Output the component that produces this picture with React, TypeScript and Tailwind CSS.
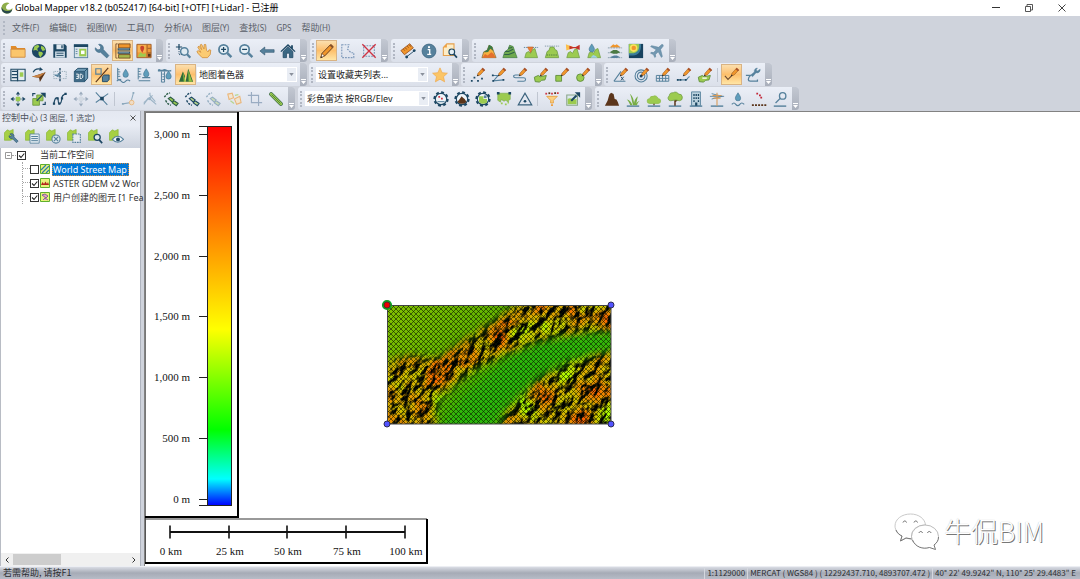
import React from "react";
import type { ReactNode } from "react";

const navy = "#1d4763";
const steel = "#56819c";
const green = "#9ccb50";
const orange = "#f0962c";
const brown = "#5b351b";

function Icon({ children, size = "h-[18px] w-[18px]" }: { children: ReactNode; size?: string }) {
  return (
    <svg viewBox="0 0 18 18" className={size} fill="none" aria-hidden="true">
      {children}
    </svg>
  );
}

const pencil = (
  <g>
    <path d="M9 7 14 1.400l2.400 2.200L11.400 9l-3 1z" fill={orange} stroke="#93541c" strokeWidth=".6" />
    <path d="m13 2.400 1.300-1.500 2.800 2.600-1.400 1.300z" fill="#a94f28" />
    <path d="m7.600 10.400.9-2 1.400 1.200z" fill="#2b2b2b" />
  </g>
);
const wave = <path d="M2 17h14" stroke={steel} strokeWidth="1.600" />;
const lowHill = "M2 16.500 3.600 11l2.600-1.400 2.200 2 2.400-4.200 2.600-1.200 3 10.300z";
const magnifier = (sign: ReactNode) => (
  <>
    <circle cx="7.400" cy="7.200" r="5.200" fill="#e6f0f6" stroke={steel} strokeWidth="2" />
    <path d="m11.600 11.400 4.600 4.600" stroke={steel} strokeWidth="2.800" />
    {sign}
  </>
);
const gear = (inner: ReactNode) => (
  <>
    <circle cx="9" cy="9" r="7.400" fill="none" stroke={navy} strokeWidth="2.400" strokeDasharray="3.200 2.600" />
    <circle cx="9" cy="9" r="6.400" fill="#eff4f8" stroke={navy} strokeWidth="1.300" />
    {inner}
  </>
);
const poly = <path d="M1.500 11.500 6 9.500l2 1.500 7-1.500-1.500 5-4 .5-2 2-5-.5z" fill={green} stroke="#5c8d3b" strokeWidth="1" />;
const crossArrows = (c: string, mid: string) => (
  <>
    <path d="M9 .5 11.400 4H6.600zM9 17.500l-2.400-3.500h4.800zM.5 9 4 6.600v4.800zM17.500 9 14 11.400V6.600z" fill={c} />
    <path d="M9 4v10M4 9h10" stroke={c} strokeWidth="1" strokeDasharray="1.500 1" />
    <rect x="6.500" y="6.500" width="5" height="5" fill={mid} />
  </>
);
const chain = (a: string, b: string) => (
  <>
    <path d="m6 8.500 2.500-1.500 4 3-2 2.500zM10.500 13.500l2-2.500 4.500 3-2 2.500z" fill={a} stroke={b} strokeWidth="1.200" />
    <path d="M1.500 7C3 5 4 3 8 2M3 10.500c1 3 3 4.500 6 5.500" stroke={b} strokeWidth="1.500" strokeDasharray="2.500 1.200" />
  </>
);
const drop = (x: number, y: number) => (
  <path transform={`translate(${x} ${y})`} d="M0-4.500C1.600-2 3 0 3 1.600a3 3 0 0 1-6 0C-3 0-1.600-2 0-4.500z" fill="#5f9dbb" stroke="#3a6987" strokeWidth=".6" />
);

const art: Record<string, ReactNode> = {
  open: (
    <>
      <path d="M1 16V3.500h5.500l1.500 2h9V16z" fill="#e08b2a" />
      <path d="M1 16V7h16v9z" fill="#fbc66c" stroke="#c58238" strokeWidth=".8" />
    </>
  ),
  globe: (
    <>
      <circle cx="9" cy="9" r="8" fill={navy} />
      <path d="M4 3.500 8 2l1.500 2L7 6.500 8 9 5.500 8 2.500 8.500zM8.500 9.500l4 .5 1 2-3 4.200L8.500 13zM11.500 3l3 1.500 1.600 3.500-3 1-2-3z" fill={green} />
    </>
  ),
  save: (
    <>
      <path d="M1.500 1.500h13l2 2v13h-15z" fill={navy} />
      <path d="M5 1.500h8v5.500H5z" fill="#dfe8ef" />
      <path d="M10.500 2.500h1.500v3.500h-1.500z" fill={navy} />
      <path d="M3.500 9.500h11v7h-11z" fill="#cfdde7" />
      <path d="M5 11.500h8M5 14h8" stroke={navy} strokeWidth="1" />
    </>
  ),
  overlay: (
    <>
      <rect x="1.500" y="2" width="15" height="14.500" fill="#dbe5ec" stroke={steel} />
      <path d="M1 1.500h16v3H1z" fill={navy} />
      <path d="M3 7h2M3 9.500h2M3 12h2" stroke={steel} />
      <rect x="7" y="6.500" width="8" height="8.500" fill={green} />
      <rect x="9" y="8.500" width="4" height="4" fill="#fff" />
    </>
  ),
  wrench: (
    <path d="M6.600 1.400a4.600 4.600 0 0 1 3.800 5.800l6.400 7-2.400 2.600-7-6.400A4.600 4.600 0 0 1 1.400 5.400l3 2.400 2.800-.8.400-2.800-2.400-2.600z" fill={steel} stroke="#3b6885" strokeWidth=".7" />
  ),
  layers: (
    <>
      <path d="M4 1h13v4.500H4z" fill={orange} stroke={brown} strokeWidth=".8" />
      <path d="M3 6h14v2.500H3zM3 9.500h14V12H3z" fill={navy} />
      <path d="M4 6.800h12M4 10.400h12" stroke="#b7c9d5" strokeWidth=".8" />
      <path d="M4 13h13v4H4z" fill="#a5b64a" stroke={brown} strokeWidth=".8" />
      <path d="M3 1H1v16h2" stroke={brown} strokeWidth=".8" />
    </>
  ),
  maplib: (
    <>
      <path d="M1 1.500h16v15H1z" fill="#f09a38" stroke="#9d5b28" />
      <path d="M2 2.500h9v8H2z" fill="#f6b352" />
      <path d="m2 15.500 3-5 3 2 3-1v4z" fill={green} />
      <circle cx="7" cy="5.500" r="2.300" fill="#c9422b" />
      <path d="m5 7 2 4 2-4z" fill="#c9422b" />
      <path d="M12.500 2v14M13 6h4M13 11h4" stroke="#9d5b28" />
      <path d="M13.500 12h3v3.500h-3z" fill={brown} />
    </>
  ),
  zoombox: (
    <>
      <path d="M4.500 1v7M1 4.500h7" stroke={navy} strokeWidth="1.400" />
      <circle cx="10.500" cy="9.500" r="4.200" fill="#dfeaf1" stroke={steel} strokeWidth="1.700" />
      <path d="m13.600 12.600 3.600 3.900" stroke={steel} strokeWidth="2.400" />
      <path d="M4.500 9v4h3" stroke={navy} strokeDasharray="1 1" />
    </>
  ),
  hand: (
    <path d="M7 16.500 2.500 12 1 9.500l1.500-.9 3 1.900L2 4.500l1.400-1 3 4L4.600 2.200 6.300 1.500 9 6.800l.2-5 1.700-.2.900 6.500 1.800 2 1-2.400 2 .3-.6 5-3 3.500z" fill="#fbcb72" stroke="#cf8d3a" strokeWidth=".9" />
  ),
  zoomin: magnifier(<path d="M7.400 4.400V10M4.600 7.200h5.600" stroke={navy} strokeWidth="1.400" />),
  zoomout: magnifier(<path d="M4.600 7.200h5.600" stroke={navy} strokeWidth="1.400" />),
  back: <path d="M1 9 6.500 4.500v3H17v3H6.500v3z" fill={steel} stroke="#31566f" strokeWidth=".7" />,
  home: (
    <>
      <path d="M9 1 .5 9.200l1 1L9 3.400l7.500 6.800 1-1L14.500 6.500V2.500h-2v2z" fill={navy} />
      <path d="M3.500 9.500 9 4.300l5.500 5.200v7h-3.800v-5H7.300v5H3.500z" fill="#3c6883" stroke={navy} strokeWidth=".8" />
    </>
  ),
  pencil: (
    <>
      <path d="M3.500 11.500 12.800 2l3 2.800L6.500 14.500l-4.500 2z" fill={orange} stroke={brown} strokeWidth="1" />
      <path d="m12 2.800 1.600-1.600 3 2.800-1.600 1.800z" fill="#86512a" />
      <path d="m3.500 12 2.500 2.500-4 2z" fill="#fff" stroke={brown} strokeWidth=".6" />
      <path d="m2 16.500.4-1.600 1.400 1z" fill="#111" />
    </>
  ),
  selpoly: <path d="M2 2h8L8.500 7l4 4h3v5.500H2z" stroke="#7f9abb" strokeWidth="1.300" strokeDasharray="2 1.200" />,
  redx: (
    <>
      <path d="M3 3h12v12H3z" stroke="#7893b3" strokeWidth="1.200" strokeDasharray="2 1.200" />
      <path d="m1.500 1.500 15 15M16.500 1.500l-15 15" stroke="#cf3444" strokeWidth="1.500" />
    </>
  ),
  ruler: (
    <>
      <path d="M1 8.500 11 .8l4 4.700-10 7.700z" fill={orange} stroke="#964d1d" strokeWidth=".9" />
      <path d="m4 7 1.300 1.500M6 5.300l1.600 2M8.300 3.600l1.300 1.600M10.500 2l1.500 2" stroke="#7a3c13" strokeWidth=".9" />
      <path d="m7.500 15.500 9-7" stroke={navy} strokeWidth="1" />
      <circle cx="7.500" cy="15.700" r="1.600" fill={navy} />
      <circle cx="16" cy="8.500" r="1.600" fill={navy} />
    </>
  ),
  info: (
    <>
      <circle cx="9" cy="9" r="7.800" fill={steel} stroke="#3c6681" strokeWidth=".9" />
      <path d="M7.500 7.500h2.300v5M7 12.800h4.500" stroke="#fff" strokeWidth="1.500" />
      <circle cx="9" cy="4.700" r="1.200" fill="#fff" />
    </>
  ),
  docfind: (
    <>
      <path d="M5.500 1h8v13h-12V5z" fill="#fcedc8" stroke="#e5a04c" strokeWidth="1.200" />
      <path d="M5.500 1v4h-4z" fill="#f0a040" />
      <circle cx="11" cy="10" r="3.200" fill="#e5eff5" stroke={navy} strokeWidth="1.300" />
      <path d="m13.200 12.400 3.600 4" stroke={navy} strokeWidth="2" />
    </>
  ),
  terr1: (
    <>
      <path d="M1 16.500 3 10l4-2 2-5.500 3.500 2L14 9l3 7.500z" fill="#f6b040" stroke="#6c5a2a" strokeWidth=".7" />
      <path d="m3 10.500 4-3 2-5.500 3.500 2L14 9l-3.500-2.500L8 10l-3 .5z" fill="#3c7a45" />
      <path d="m1.500 16.500 3-4 3 1.500 4-3.500 2.500 1.500 2.500 4.500z" fill="#e4702f" />
    </>
  ),
  terr2: (
    <>
      <path d="M1 16.500 3 10l4-3 1.500-4.500 4 1.500L14 8.500l3 8z" fill="#6fa94e" stroke="#3f7a42" strokeWidth=".8" />
      <path d="M3.500 9.500h4l5-2.500M2.500 13h5l6.500-2.500M7 6l4.500-1" stroke="#2f6349" strokeWidth="1.200" />
    </>
  ),
  terr3: (
    <>
      <path d={lowHill} fill={green} stroke="#6d9a42" strokeWidth=".8" />
      <path d="M1 5h16" stroke={steel} strokeDasharray="1.500 1" />
      <path d="M5 4.500h6.500L8.500 11z" fill="#ed7d31" stroke="#b85b22" strokeWidth=".6" />
    </>
  ),
  terr4: (
    <>
      <path d="m1.500 16.500 2-7 2-1 1.500-4h4l1.500 3 2 1 2 8z" fill={green} stroke="#6d9a42" strokeWidth=".9" />
      <path d="M1 3.500h16" stroke="#7c93a0" strokeDasharray="1.500 1" />
      <path d="M3 13.500h12" stroke="#45753c" strokeDasharray="1.500 1" />
    </>
  ),
  viewshed: (
    <>
      <path d={lowHill} fill={green} stroke="#6d9a42" strokeWidth=".8" />
      <path d="M1 1.500 9 4.500V6L1.500 8.500z" fill="#fbc04d" />
      <path d="m5 3 4 1.500h3L16.500 2v6L12 6H9L5 7z" fill="#c33027" />
    </>
  ),
  watershed: (
    <>
      <path d={lowHill} fill={green} stroke="#6d9a42" strokeWidth=".8" />
      <path d="m5 16.500 3-3 3 1 2 2z" fill="#9fd0e8" />
      {drop(6.500, 5.500)}
    </>
  ),
  compare: (
    <>
      <path d="m3 5 4-3.500 2 1 2-1L15.500 5z" fill={orange} />
      <path d="M1 5.500h16M1 11h16M1 16.500h16" stroke="#8197a5" strokeDasharray="2 1" />
      <path d="m3 10.500 4-2.500h4l4 2.500-4 1.500H7z" fill="#4b7a44" />
      <path d="m3 16 5-2h3l4 2-4 1H6z" fill={steel} />
    </>
  ),
  heat: (
    <>
      <path d="M1 1h16v16H1z" fill="#17425f" />
      <path d="M1 1h13.500c1 8-3 13-9 13H1z" fill="#3b7d9b" />
      <path d="M1 1h11.500c1 7-3 10.500-8 10.500H1z" fill={green} />
      <path d="M2 5.500A4.300 4.300 0 1 1 6.500 10 4.300 4.300 0 0 1 2 5.500z" fill="#fae15b" />
      <circle cx="6.500" cy="5.500" r="2.500" fill={orange} />
    </>
  ),
  plane: (
    <path d="m15.800 2-1.500-.3-3.400 3.200L3 3l-1.200 1 6.400 3.600-3 3.200-2.700-.3-.8 1L5 13l1.500 3.300 1-.8-.3-2.700 3.200-3L14 16.200l1-1.200L13 7.200l3-3.700z" fill="#7398b1" stroke="#557e99" strokeWidth=".6" />
  ),
  layout: (
    <>
      <path d="M1 2.500h16v13H1z" fill="#e4edf2" stroke={navy} strokeWidth="1.200" />
      <path d="M2 5h6M2 8.500h6M2 12h6M8.500 3v13" stroke={navy} strokeWidth="1.400" />
      <path d="M11 6h4v5h-4z" fill={green} />
    </>
  ),
  gps: (
    <>
      <path d="M1 11 16.500 6 10 17l-1-5z" fill={brown} />
      <path d="M1 11 16.500 6 9 12z" fill="#c98242" />
      <path d="M2.500 6C4 2.500 7 1.500 11 2.500" stroke={navy} strokeWidth="1.500" />
      <path d="m10 0 3.500 3-4 1.500z" fill={navy} />
    </>
  ),
  mirror: (
    <>
      <path d="M9 1v16" stroke={navy} strokeWidth="1.500" strokeDasharray="3 1" />
      <path d="M7 5H2v8h5M11 5h5v8h-5" stroke="#94a9b7" strokeDasharray="1.500 1" />
      <path d="M3 9h6l-2-2v4z" fill={steel} stroke={steel} />
    </>
  ),
  cube: (
    <>
      <path d="m1.500 5 4-3.500h11v11L13 16.500H1.500z" fill="#6f9ab4" stroke={navy} strokeWidth="1" />
      <path d="M1.500 5H13v11.500M13 5l3.500-3.500" stroke={navy} strokeWidth="1" />
      <path d="M1.500 5H13v11.500H1.500z" fill="#3f6a86" />
      <path d="M3.500 8H6v5H3.500M4 10.500h2M8 8v5h1.500L11 11.500V9.500L9.500 8z" stroke="#fff" strokeWidth="1" />
    </>
  ),
  slash: (
    <>
      <path d="M2 2h6v6H2z" stroke={steel} strokeWidth="1.300" />
      <path d="M16 1 2 17" stroke={brown} strokeWidth="1.300" />
      <path d="m9.500 11 2-2H17v5l-2 2.500H9.500z" fill={steel} stroke={navy} />
    </>
  ),
  water1: (
    <>
      <path d="M3 1v13h4M3 3h2M3 5.500h3M3 8h2M3 10.500h3" stroke={steel} strokeWidth="1.100" />
      <path d="M2 16c2-2 3-2 5 0s3 2 5 0 3-2 5 0" stroke={steel} strokeWidth="1.200" />
      {drop(12, 7)}
    </>
  ),
  water2: (
    <>
      <path d="M2.500 1v13M2.500 2H6M2.500 5H5M2.500 8H6M2.500 11H5" stroke={steel} strokeWidth="1.100" />
      <path d="M7 12h9M3 15.500h13" stroke={steel} strokeWidth="1.300" />
      {drop(11.500, 6.500)}
    </>
  ),
  water3: (
    <>
      <path d="M1 3c2-2 3 1 5 0s3-1 5 0 3 1 5 0v2H1z" fill={steel} />
      <path d="M5 5v12h3.500V5M6 8h2M6 11h2M6 14h2" stroke={steel} strokeWidth="1.100" />
      {drop(13, 9)}
    </>
  ),
  shader: (
    <>
      <path d="M1 16.500 5.500 5 8 10.500l-1 6zM8.500 16.500 11.500 2l5.500 14.500z" fill="#2f6b3a" />
      <path d="M5.500 6 6.500 16.500h2.500zM11.500 3 12 16.500h4z" fill="#8fbf3f" />
    </>
  ),
  star: <path d="m9 1 2.400 5.400 5.900.6-4.400 3.900 1.300 5.800L9 13.700l-5.200 3 1.300-5.800L.7 7l5.900-.6z" fill="#fbc566" stroke="#f0a94c" strokeWidth=".8" />,
  pt: (
    <>
      <path d="M1 16.500h2v-2H1zM4 13h2v-2H4zM8 16.500h2v-2H8zM12.500 14h2v-2h-2z" fill={navy} />
      {pencil}
    </>
  ),
  ln: (
    <>
      <path d="M2 9.500h6L3 15.500l11-1" stroke={steel} strokeWidth="1.200" />
      <path d="M1 8.500h2v2H1zM1.500 14.500h2v2h-2zM13 13.500h2v2h-2z" fill={navy} />
      {pencil}
    </>
  ),
  free: (
    <>
      <path d="M9 9H4c-3 0-3 3 0 3h9c3 0 3 4 0 4H6" stroke={steel} strokeWidth="1.200" />
      {pencil}
    </>
  ),
  area: (
    <>
      {poly}
      {pencil}
    </>
  ),
  rect: (
    <>
      <path d="M2 9.500h6.500V16H2z" fill={green} stroke="#5c8d3b" />
      {pencil}
    </>
  ),
  circle: (
    <>
      <circle cx="6" cy="12" r="4.200" fill={green} stroke="#5c8d3b" />
      {pencil}
    </>
  ),
  cogo: (
    <>
      <path d="M1 16h13M1 16 9 5" stroke={steel} strokeWidth="1.300" />
      <path d="m9 11 3 4M12 11l-3 4" stroke={navy} strokeWidth="1" />
      {pencil}
    </>
  ),
  rings: (
    <>
      <circle cx="8" cy="10" r="6.800" stroke={steel} strokeWidth="1.200" />
      <circle cx="8" cy="10" r="4.200" stroke={steel} strokeWidth="1.200" />
      <circle cx="8" cy="10" r="1.700" fill={navy} />
      {pencil}
    </>
  ),
  gridp: (
    <>
      <path d="M1.500 9.500h14v6.500h-14zM1.500 12.800h14M5 9.500V16M8.500 9.500V16M12 9.500V16" stroke={steel} strokeWidth="1.100" />
      {pencil}
    </>
  ),
  nodep: (
    <>
      <path d="M1 14.500h10c2.500 0 1.500-3.500 4.500-3.500" stroke={steel} strokeWidth="1.200" />
      <path d="M1 13.500h2v2H1zM4 13.500h2v2H4zM10 13.500h2v2h-2z" fill={navy} />
      {pencil}
    </>
  ),
  areap: (
    <>
      {poly}
      <path d="M6 12.500h5" stroke="#fff" strokeWidth="1.500" />
      {pencil}
    </>
  ),
  digit: (
    <>
      <path d="m1 10 3.500 4L9 9.500" stroke="#6d4a2e" strokeWidth="1.200" />
      {pencil}
    </>
  ),
  pathwr: (
    <>
      <path d="M1 9.500h5c-3 3-3 6.500 0 6.500h8v-2" stroke={steel} strokeWidth="1.400" />
      <path d="M17 2.500a3.500 3.500 0 0 1-4.500 4L8.500 11l-2-2 4-3.500A3.500 3.500 0 0 1 14 1.200l-1.500 2.300 1.500 1z" fill={steel} stroke={steel} strokeWidth=".5" />
    </>
  ),
  move: crossArrows(navy, green),
  scale: (
    <>
      <path d="M2 8.500h7.500V16H2z" fill={green} stroke="#6d9a42" />
      <path d="M6.500 4.500h7V11h-7z" fill={green} stroke="#6d9a42" />
      <path d="m6.500 11 6-6M2 6V3h3M16 12v3h-3" stroke={navy} strokeWidth="1.300" />
      <path d="M10.500 2h6v6z" fill={navy} />
    </>
  ),
  rotate: (
    <>
      <path d="M2 15C3 9 4 7 6 8s0 5 2 6 3-3 3-6 2-4 5-5" stroke={navy} strokeWidth="1.300" />
      <path d="M1 13h2.500v2.500H1zM5 7h2.500v2.500H5zM7 13h2.500v2.500H7zM10 7h2.500v2.500H10zM14 2h2.500v2.500H14z" fill={navy} />
    </>
  ),
  moveoff: crossArrows("#9aaabc", "#d3dae3"),
  split: (
    <>
      <path d="m2 1.500 13 14M16 3 2 13" stroke={steel} strokeWidth="1.200" />
      <path d="M7 6.500h4v4H7z" fill={navy} />
    </>
  ),
  vtx: (
    <g opacity=".6">
      <path d="M2 14.500 11 13l3-11" stroke={steel} strokeWidth="1.200" />
      <circle cx="12" cy="13" r="2.600" fill="#fad8aa" stroke={orange} />
      <path d="M13 1h2v2h-2zM1 13.500h2v2H1z" fill={steel} />
    </g>
  ),
  cut: (
    <g opacity=".5">
      <path d="M2 13 12 5M9 2v3l6 7" stroke={steel} strokeWidth="1.200" />
      <path d="m9 9 7 6M7 8l-5 7" stroke={steel} strokeWidth="1.200" />
      <circle cx="8.500" cy="8.500" r="1.800" fill={steel} />
    </g>
  ),
  link1: chain(green, "#2b5b47"),
  link2: chain("#b9d58b", navy),
  link3: <g opacity=".55">{chain("#b9d58b", steel)}</g>,
  boxes: (
    <g opacity=".6">
      <path d="m2 3.500 5-1 1.500 5-5 2zM9.500 9l6-3 1.500 7-5 2z" fill="#fbe3bb" stroke={orange} strokeWidth="1.200" />
      <path d="m5 11 4 3M10 5l4-1" stroke={green} strokeWidth="1.500" />
    </g>
  ),
  crop: <path d="M5 1v12h12M1 5h12v12" stroke="#9aacc2" strokeWidth="1.300" />,
  tube: (
    <>
      <path d="m3.500 3.500 11 11" stroke="#3c6b46" strokeWidth="4.600" strokeLinecap="round" />
      <path d="m3.500 3.500 11 11" stroke={green} strokeWidth="3" strokeLinecap="round" />
      <path d="m4 4 10 10" stroke="#4c7d35" strokeWidth="1" />
    </>
  ),
  lidar1: gear(
    <>
      <path d="M5 12h8" stroke={steel} strokeWidth="1.200" />
      <path d="M6 5.500h2v2H6zM9 7.500h2v2H9z" fill="#cf3444" />
    </>,
  ),
  lidar2: gear(<path d="m4 12 2.500-3 2-3 2 2 1.500 1 2 3c-2 3-8 3-10 0z" fill={brown} />),
  lidar3: gear(
    <>
      <path d="M4.500 6h5v3h4v4c-3 2-7 2-9-1z" fill={green} />
      <path d="M10 5h3v3h-3z" fill={steel} />
    </>,
  ),
  lidar4: (
    <>
      <path d="M2 2.500h14v7l-2 1v2l-3-2-2 1-3-2-1 3-3-2z" fill={green} stroke="#7aa84a" strokeWidth=".7" />
      <path d="M1 1h3v3H1zM14 1h3v3h-3z" fill={navy} />
      <path d="M5.500 13h2v2h-2zM10 14h2v2h-2zM13 12h1.500v2H13z" fill={green} />
    </>
  ),
  tri: (
    <>
      <path d="M9 2.500 16.500 15.500h-15z" stroke="#3a627d" strokeWidth="1.400" />
      <circle cx="9" cy="11.500" r="1.500" fill={navy} />
    </>
  ),
  filter: (
    <>
      <path d="M1.500 2h2v2h-2z" fill="#cf3444" />
      <path d="M5 1.500h2v2H5z" fill={brown} />
      <path d="M8 2h2v2H8zM14.500 1.500h2v2h-2z" fill="#cf3444" />
      <path d="M11.500 1.500h2v2h-2z" fill={brown} />
      <path d="M3 6h12l-4.500 4.500v3h-3v-3z" fill="#fbd083" stroke="#e59a35" strokeWidth=".9" />
      <path d="M8 15h2v2H8z" fill={orange} />
    </>
  ),
  extract: (
    <>
      <path d="M2 4.500h12V16H2z" fill="#dce8ef" stroke="#8aa68b" strokeWidth="1.200" />
      <path d="M3 9c3-2 6 1 10 0v6H3z" fill={green} />
      <path d="m7 11 6-6" stroke={navy} strokeWidth="2.200" />
      <path d="M11 1.500h6v6z" fill={navy} />
    </>
  ),
  ground: <path d="M1 16.500 4 11l2-7 2-2 2.800 1.500L12 9l2 .5 1.500 3 1.500 4z" fill={brown} />,
  grass: (
    <>
      {wave}
      <path d="M8.500 16C7 12 5 10 2 9.500c2 2 3 4 4 6.500zM9 16C7.500 10 7 6 5.500 3 9 6 10 10 10.500 16zM10 16c0-5 2-8 4.500-10-1 4-1.500 7-2 10zM12 16c1-3 2-4 4.500-5-2 2-2.500 3-3 5z" fill="#78ad45" />
    </>
  ),
  bush: (
    <>
      {wave}
      <path d="M9 16v-4" stroke={brown} strokeWidth="1.400" />
      <path d="M4 14a2.700 2.700 0 0 1 0-5.400A3.500 3.500 0 0 1 8 6a3.600 3.600 0 0 1 5.500 2.600A2.700 2.700 0 0 1 14 14z" fill={green} stroke="#8ab843" strokeWidth=".8" />
    </>
  ),
  tree: (
    <>
      {wave}
      <path d="M9 16.500V8M9 12l3-2.500" stroke={brown} strokeWidth="1.700" />
      <path d="M4 11a3 3 0 0 1-1.500-5.500A4 4 0 0 1 7 2a4 4 0 0 1 6 1.500A3.500 3.500 0 0 1 14 11l-4-1z" fill={green} stroke="#6d9a42" strokeWidth=".8" />
    </>
  ),
  building: (
    <>
      {wave}
      <path d="M4 1h10v15.500H4z" fill="#bcd3df" stroke={steel} />
      <path d="M6 3.500h1.500v2H6zM8.500 3.500H10v2H8.500zM11 3.500h1.500v2H11zM6 7h1.500v2H6zM8.500 7H10v2H8.500zM11 7h1.500v2H11zM6 10.500h1.500v2H6zM11 10.500h1.500v2H11zM8 13h2.500v3.500H8z" fill={navy} />
    </>
  ),
  powerline: (
    <>
      {wave}
      <path d="M1 6h16M3 3l12 3M3 9l12-3" stroke={steel} strokeWidth="1" />
      <path d="M9 2v14.500M4 5h10M5 8h8" stroke="#d99a55" strokeWidth="1.200" />
    </>
  ),
  water: (
    <>
      {drop(9, 6.500)}
      <path d="M2 15c2-2 3-2 4.500 0s3 2 4.500 0 3-2 5 0" stroke={steel} strokeWidth="1.300" />
    </>
  ),
  noise: (
    <>
      <path d="M6 2h2v2H6zM9 4h2v2H9zM10.500 6.500h2v2h-2z" fill="#c22638" />
      <path d="M1 15h2.200v2H1zM4.500 15h2.200v2H4.500zM8 15h2.200v2H8zM11.500 15h2.200v2h-2.200zM15 15h2.200v2H15z" fill={brown} />
    </>
  ),
  key: (
    <>
      {wave}
      <circle cx="12" cy="5.500" r="3.600" stroke={steel} strokeWidth="1.500" />
      <path d="M9.500 8 4 13.500" stroke={steel} strokeWidth="1.500" />
    </>
  ),
};

const overlayBase = <path d="M.5 4.500 4 1l3 1.500L11 .5V12l-3 1.500H.500z" fill="#a6d044" stroke="#86b434" strokeWidth=".8" />;
const panelArt: [string, ReactNode][] = [
  ["选项", <g key="o"><path d="M7 6a3.200 3.200 0 0 1 5 3.500l5 5-2 2-5-5A3.200 3.200 0 0 1 6 8l2.500 1L9.500 8z" fill={steel} stroke={navy} strokeWidth=".6" /></g>],
  ["元数据", <g key="m"><path d="M6 6h11v11H6z" fill="#e7eff4" stroke={steel} /><path d="M7.500 9h8M7.500 11.500h8M7.500 14h8" stroke={steel} strokeWidth="1.200" /></g>],
  ["关闭图层", <g key="c"><circle cx="12" cy="12" r="4.900" fill="#dce7ed" stroke={steel} strokeWidth="1.300" /><path d="m9.500 9.500 5 5M14.500 9.500l-5 5" stroke={steel} strokeWidth="1.500" /></g>],
  ["边界", <path key="b" d="M7 6h9v10H7z" fill="#e4e9f0" stroke={steel} strokeWidth="1.300" strokeDasharray="2 1" />],
  ["缩放到图层", <g key="z"><circle cx="11" cy="10" r="3.700" fill="#dce7ed" stroke={navy} strokeWidth="1.500" /><path d="m13.500 13 3.500 4" stroke={navy} strokeWidth="2" /></g>],
  ["可见性", <g key="v"><path d="M4 12.500c4-5 9-5 13.500 0-4.500 4.500-9.500 4.500-13.500 0z" fill="#eef4f7" stroke={steel} strokeWidth="1.300" /><circle cx="10.800" cy="12.500" r="2.400" fill={navy} /></g>],
];

function Tool({ name }: { name: string }) {
  const active = ["layers", "pencil", "slash", "shader", "digit"].includes(name);
  return (
    <button
      type="button"
      aria-label={name}
      aria-pressed={active}
      className={
        active
          ? "grid h-[21px] w-[21px] shrink-0 place-items-center border border-[#d9b383] bg-linear-to-b from-[#fbdfae] via-[#fdbf6b] to-[#ffe6a6]"
          : "grid h-[21px] w-[21px] shrink-0 place-items-center hover:bg-[#fde3b3]"
      }
    >
      <Icon size="h-4 w-4">{art[name]}</Icon>
    </button>
  );
}

function Bar({ children }: { children: ReactNode }) {
  return (
    <div role="toolbar" className="flex h-[23px] shrink-0 items-center rounded-[3px] bg-linear-to-b from-[#ebeff7] to-[#dbe0ea]">
      <span className="ml-[2px] mr-[2px] h-4 w-[2px] border-l-2 border-dotted border-[#b1b7c3]" />
      {children}
      <button type="button" aria-label="更多按钮" className="ml-[2px] flex h-[23px] w-[7px] flex-col items-center justify-end rounded-r-[3px] bg-linear-to-b from-[#c3c8d2] to-[#a9afbb] pb-[2px]">
        <svg viewBox="0 0 5 5" className="h-[5px] w-[5px]" aria-hidden="true">
          <path d="M0 0h5v1H0zM0 2h5L2.500 5z" fill="#fff" />
        </svg>
      </button>
    </div>
  );
}

const tools = (names: string) => names.split(" ").map((n) => <Tool key={n} name={n} />);
const Sep = () => <span className="ml-[2px] mr-[3px] h-[14px] w-px bg-[#c0c6d1]" />;

function Combo({ label, value, width }: { label: string; value: string; width: string }) {
  return (
    <div className={`relative mx-px h-[15px] shrink-0 ${width}`}>
      <select aria-label={label} className="block h-[15px] w-full appearance-none bg-white pl-[2px] pr-3 text-[9px] leading-[15px] text-[#1c1c1c] outline-none">
        <option>{value}</option>
      </select>
      <span className="pointer-events-none absolute inset-y-px right-px grid w-[9px] place-items-center bg-[#e9edf4]">
        <svg viewBox="0 0 6 4" className="h-[3px] w-[5px]" aria-hidden="true">
          <path d="M0 0h6L3 4z" fill="#8a909b" />
        </svg>
      </span>
    </div>
  );
}

const menus: [string, string][] = [
  ["文件", "(F)"],
  ["编辑", "(E)"],
  ["视图", "(W)"],
  ["工具", "(T)"],
  ["分析", "(A)"],
  ["图层", "(Y)"],
  ["查找", "(S)"],
  ["", "GPS"],
  ["帮助", "(H)"],
];

function TreeRow({ label, checked, kind }: { label: string; checked: boolean; kind: "osm" | "dem" | "vec" }) {
  const selected = kind === "osm";
  return (
    <li className="flex h-[14px] items-center whitespace-nowrap pl-[21px]">
      <span className="h-[14px] w-2 shrink-0 border-l border-dotted border-[#a5a5a5]">
        <span className="block h-[7px] border-b border-dotted border-[#a5a5a5]" />
      </span>
      <label className="flex items-center">
        <Check checked={checked} />
        <svg viewBox="0 0 10 10" className="ml-px h-[10px] w-[10px] shrink-0" aria-hidden="true">
          <path d="M.5.500h9v9h-9z" fill="#e9f27c" stroke="#5fb02c" />
          {kind === "osm" && <path d="m1 6 5-5M2 9l7-7M6 9l3-3" stroke="#2d7fa8" strokeWidth="1.200" />}
          {kind === "dem" && <path d="m1 7 1.500-3L4 6l1.500-2.500L7 6l1-2 1 3z" fill="#b3261e" />}
          {kind === "vec" && <path d="m2 3 3-1 3 2-2 2zM3 8l2-2 3 2" fill="#e7a2b9" stroke="#6b4f9a" strokeWidth=".8" />}
        </svg>
        <span
          className={
            selected
              ? "ml-[2px] h-[13px] border border-dotted border-[#d98a3a] bg-[#0078d7] pr-px text-[9px] leading-[11px] text-white"
              : "ml-[2px] h-[13px] pl-px text-[9px] leading-[13px] text-[#333]"
          }
        >
          {label}
        </span>
      </label>
    </li>
  );
}

function Check({ checked }: { checked: boolean }) {
  return (
    <span className="relative grid h-[9px] w-[9px] shrink-0 place-items-center">
      <input type="checkbox" defaultChecked={checked} className="peer h-[9px] w-[9px] appearance-none border border-[#333] bg-white" />
      <svg viewBox="0 0 9 9" className="pointer-events-none absolute inset-0 hidden h-[9px] w-[9px] peer-checked:block" fill="none" aria-hidden="true">
        <path d="m2 4.500 2 2 3.300-4" stroke="#222" strokeWidth="1.100" />
      </svg>
    </span>
  );
}

const heights = ["3,000 m", "2,500 m", "2,000 m", "1,500 m", "1,000 m", "500 m", "0 m"];

function Legend() {
  return (
    <svg viewBox="0 0 94 406" className="h-[406px] w-[94px] shrink-0 bg-white" role="img" aria-label="高程图例">
      <defs>
        <linearGradient id="elev" x1="0" y1="0" x2="0" y2="1">
          <stop offset="0" stopColor="#ff0000" />
          <stop offset=".535" stopColor="#ffff00" />
          <stop offset=".8" stopColor="#00ff00" />
          <stop offset=".93" stopColor="#00ffff" />
          <stop offset="1" stopColor="#0000ff" />
        </linearGradient>
      </defs>
      <path d="M0 .5h92" stroke="#777" />
      <path d="M.5 0v405" stroke="#777" />
      <path d="M0 405h93V0" fill="none" stroke="#000" strokeWidth="2" />
      <rect x="62.500" y="14.500" width="24" height="379" fill="url(#elev)" stroke="#222" />
      <path d="M54 14.500h8M54 393.500h8" stroke="#222" />
      {heights.map((h, i) => (
        <g key={h}>
          <path d={`M54 ${22.500 + Math.round(i * 60.800)}h8`} stroke="#222" />
          <text x="45" y={26 + Math.round(i * 60.800)} textAnchor="end" fontSize="11" fill="#111" fontFamily="'Liberation Serif', serif">
            {h}
          </text>
        </g>
      ))}
    </svg>
  );
}

function ScaleBar() {
  return (
    <svg viewBox="0 0 283 46" className="h-[46px] w-[283px] shrink-0 bg-white" role="img" aria-label="比例尺">
      <path d="M0 1h282" stroke="#999" strokeWidth="2" />
      <path d="M.5 0v45" stroke="#555" />
      <path d="M0 45h282V1" fill="none" stroke="#000" strokeWidth="2" />
      <path d="M25 14h235" stroke="#111" strokeWidth="2" />
      {[0, 25, 50, 75, 100].map((km, i) => (
        <g key={km}>
          <path d={`M${25 + Math.round(i * 58.700)} 7.500v13`} stroke="#111" strokeWidth="1.600" />
          <text x={26 + Math.round(i * 58.700)} y="37" textAnchor="middle" fontSize="11" fill="#111" fontFamily="'Liberation Serif', serif">
            {km} km
          </text>
        </g>
      ))}
    </svg>
  );
}

function Terrain() {
  return (
    <svg viewBox="0 0 236 131" className="absolute left-[236px] top-[187px] h-[131px] w-[236px]" role="img" aria-label="ASTER GDEM v2">
      <defs>
        <clipPath id="frame">
          <rect x="6" y="6" width="224" height="119" />
        </clipPath>
        <linearGradient id="plain" x1="0" y1="0" x2="1" y2=".5">
          <stop offset="0" stopColor="#84c000" />
          <stop offset=".4" stopColor="#62b400" />
          <stop offset=".7" stopColor="#34b408" />
          <stop offset="1" stopColor="#5cbc00" />
        </linearGradient>
        <filter id="soft" x="-10%" y="-10%" width="120%" height="120%">
          <feGaussianBlur stdDeviation="4" />
        </filter>
        <filter id="relief" x="0" y="0" width="100%" height="100%" colorInterpolationFilters="sRGB">
          <feTurbulence type="fractalNoise" baseFrequency=".13 .09" numOctaves="4" seed="21" result="n" />
          <feColorMatrix in="n" type="matrix" values="0 0 0 0 0  0 0 0 0 0  0 0 0 0 0  1 0 0 0 0" result="h" />
          <feDiffuseLighting in="h" surfaceScale="8" diffuseConstant="1.500" lightingColor="#fff" result="lit">
            <feDistantLight azimuth="200" elevation="38" />
          </feDiffuseLighting>
          <feTurbulence type="fractalNoise" baseFrequency=".035" numOctaves="3" seed="5" result="m" />
          <feColorMatrix in="m" type="matrix" values="0 .5 0 0 .6  0 -1 0 0 1.180  0 0 0 0 0  0 0 0 0 1" result="tint" />
          <feBlend in="lit" in2="tint" mode="multiply" />
        </filter>
        <mask id="ranges">
          <g filter="url(#soft)" fill="#fff">
            <path d="M0 66 30 56 60 58 92 36 124 14 142 0h94v32l-34 2-44 8-30 12-28 14-28 19-12 12-22 8v16H0z" />
            <path d="m116 131 10-20 14-14 16-16 30-18 30-8 22-4v90z" />
            <path d="M0 85h56v46H0z" />
          </g>
        </mask>
        <pattern id="hatch" width="5" height="5" patternUnits="userSpaceOnUse">
          <path d="m-1-1 7 7M6-1l-7 7" stroke="#0a1800" strokeOpacity=".85" strokeWidth=".7" />
        </pattern>
      </defs>
      <g clipPath="url(#frame)">
        <rect x="6" y="6" width="224" height="119" fill="url(#plain)" />
        <path d="M60 131 84 96l46-38 50-20 56-12v30l-60 18-46 30-22 27z" fill="#25b60c" opacity=".7" filter="url(#soft)" />
        <g mask="url(#ranges)">
          <g transform="rotate(25 118 65)">
            <rect x="-30" y="-80" width="300" height="290" filter="url(#relief)" />
          </g>
        </g>
        <rect x="6" y="6" width="224" height="119" fill="url(#hatch)" />
      </g>
      <rect x="6.500" y="6.500" width="223.500" height="118.500" fill="none" stroke="#444" />
      {[
        [230, 6],
        [6, 125],
        [230, 125],
      ].map(([x, y]) => (
        <circle key={`${x}-${y}`} cx={x} cy={y} r="3" fill="#5353ff" stroke="#2c2c55" />
      ))}
      <circle cx="6" cy="6" r="4.200" fill="#f00000" stroke="#0aa52a" strokeWidth="1.800" />
      <circle cx="6" cy="6" r="3" fill="none" stroke="#333" strokeWidth=".8" />
    </svg>
  );
}

export default function App() {
  return (
    <div className="flex h-screen min-w-0 flex-col overflow-hidden bg-[#cfd3dc] font-['Noto_Sans','Noto_Sans_CJK_SC',sans-serif] text-[#333]">
      <header className="flex h-4 shrink-0 items-center bg-white pl-px">
        <svg viewBox="0 0 12 12" className="h-3 w-3" aria-hidden="true">
          <path d="M6 .5a5.500 5.500 0 1 0 5.500 5.500C9 9 5 8 5 5.500 5 3.500 6.500 2 8.500 1.500A5 5 0 0 0 6 .5z" fill="#8fae4a" />
          <path d="M.7 5c1 4 5.500 5.500 10.600 2.500A5.500 5.500 0 0 1 .5 6z" fill="#27464a" />
        </svg>
        <h1 className="ml-[2px] whitespace-nowrap text-[9px] leading-4 text-black">Global Mapper v18.2 (b052417) [64-bit] [+OTF] [+Lidar] - 已注册</h1>
        <div className="ml-auto flex pr-[2px]">
          <button type="button" aria-label="最小化" className="grid h-4 w-[33px] place-items-center">
            <svg viewBox="0 0 8 8" className="h-2 w-2"><path d="M0 3.500h8" stroke="#333" /></svg>
          </button>
          <button type="button" aria-label="还原" className="grid h-4 w-[33px] place-items-center">
            <svg viewBox="0 0 8 8" className="h-2 w-2" fill="none"><path d="M.5 2.500h5v5h-5zM2 2V.500h5.500V6H6" stroke="#555" /></svg>
          </button>
          <button type="button" aria-label="关闭" className="grid h-4 w-[33px] place-items-center">
            <svg viewBox="0 0 8 8" className="h-2 w-2"><path d="m.5.500 7 7M7.500.500l-7 7" stroke="#444" /></svg>
          </button>
        </div>
      </header>

      <nav className="flex h-[23px] shrink-0 items-center gap-[10px] pl-[3px] text-[#5a5f69]">
        <span className="-mr-[3px] h-[14px] border-l-2 border-dotted border-[#b1b7c3]" />
        {menus.map(([name, key]) => (
          <button key={key} type="button" className="flex items-baseline whitespace-nowrap text-[9px] leading-4">
            {name}
            <span className="text-[8px]">{key}</span>
          </button>
        ))}
      </nav>

      <div className="flex shrink-0 flex-col gap-px pb-px pl-px">
        <div className="flex gap-[3px]">
          <Bar>{tools("open globe save overlay wrench layers maplib")}</Bar>
          <Bar>{tools("zoombox hand zoomin zoomout back home")}</Bar>
          <Bar>{tools("pencil selpoly redx")}</Bar>
          <Bar>{tools("ruler info docfind")}</Bar>
          <Bar>{tools("terr1 terr2 terr3 terr4 viewshed watershed compare heat plane")}</Bar>
        </div>
        <div className="flex gap-[2px]">
          <Bar>
            {tools("layout gps mirror cube slash water1 water2 water3 shader")}
            <Combo label="着色器" value="地图着色器" width="w-[100px]" />
          </Bar>
          <Bar>
            <Combo label="收藏夹" value="设置收藏夹列表..." width="w-[112px]" />
            {tools("star")}
          </Bar>
          <Bar>{tools("pt ln free area rect circle")}</Bar>
          <Bar>
            {tools("cogo rings gridp nodep areap")}
            <Sep />
            {tools("digit pathwr")}
          </Bar>
        </div>
        <div className="flex gap-[3px]">
          <Bar>
            {tools("move scale rotate moveoff split")}
            <Sep />
            {tools("vtx cut link1 link2 link3 boxes crop tube")}
          </Bar>
          <Bar>
            <Combo label="激光雷达渲染" value="彩色雷达 按RGB/Elev" width="w-[124px]" />
            {tools("lidar1 lidar2 lidar3 lidar4 tri")}
            <Sep />
            {tools("filter extract")}
          </Bar>
          <Bar>{tools("ground grass bush tree building powerline water noise key")}</Bar>
        </div>
      </div>

      <main className="flex min-h-0 flex-1">
        <aside className="flex w-[141px] shrink-0 flex-col border-r border-[#aeb3be] bg-[#e6eaf2]">
          <div className="flex h-[14px] items-center justify-between bg-linear-to-b from-[#e4e8f1] to-[#e9edf5] pl-[2px] pr-1">
            <h2 className="whitespace-nowrap text-[9px] leading-[14px] text-[#4e535c]">
              控制中心 <span className="text-[8px]">(3 图层, 1 选定)</span>
            </h2>
            <button type="button" aria-label="关闭面板">
              <svg viewBox="0 0 6 6" className="h-[6px] w-[6px]"><path d="m.5.500 5 5M5.500.500l-5 5" stroke="#555" /></svg>
            </button>
          </div>
          <div className="flex h-[23px] shrink-0 items-center bg-linear-to-b from-[#e9edf5] to-[#cdd3de] pl-px">
            {panelArt.map(([name, shape]) => (
              <button key={name} type="button" aria-label={name} className="grid h-[21px] w-[21px] place-items-center">
                <Icon size="h-[15px] w-[15px]">
                  {overlayBase}
                  {shape}
                </Icon>
              </button>
            ))}
          </div>
          <div className="min-h-0 flex-1 border-l border-[#b8bcc4] bg-white">
            <div className="flex h-[14px] items-center pl-1">
              <svg viewBox="0 0 7 7" className="h-[7px] w-[7px]" fill="none" aria-hidden="true">
                <path d="M.5.500h6v6h-6zM2 3.500h3" stroke="#999" />
              </svg>
              <span className="mr-px w-1 border-t border-dotted border-[#a5a5a5]" />
              <label className="flex items-center text-[9px] leading-[14px] text-[#333]">
                <Check checked />
                <span className="ml-[14px]">当前工作空间</span>
              </label>
            </div>
            <ul>
              <TreeRow label="World Street Map" checked={false} kind="osm" />
              <TreeRow label="ASTER GDEM v2 Wor" checked kind="dem" />
              <TreeRow label="用户创建的图元 [1 Fea" checked kind="vec" />
            </ul>
          </div>
          <div className="flex h-[13px] shrink-0 items-center border-l border-[#b8bcc4] bg-[#f0f0f0] px-1">
            <svg viewBox="0 0 4 6" className="h-[6px] w-1" fill="none"><path d="M3.500.500 1 3l2.500 2.500" stroke="#333" /></svg>
            <span className="ml-1 h-[11px] w-12 bg-[#cdcdcd]" />
            <svg viewBox="0 0 4 6" className="ml-auto h-[6px] w-1" fill="none"><path d="M.500.500 3 3 .500 5.500" stroke="#333" /></svg>
          </div>
        </aside>

        <section className="relative ml-[3px] flex min-w-0 flex-1 flex-col items-start justify-between border-l border-t border-[#828282] bg-white pb-[2px]">
          <Legend />
          <ScaleBar />
          <Terrain />
          <div className="absolute bottom-4 right-9 flex items-center gap-1">
            <svg viewBox="0 0 46 38" className="h-[38px] w-[46px]" fill="#fff" aria-hidden="true">
              <path d="M1 14C1 7 8 2 16.500 2S31 7 31.500 13c-8 0-14 4.500-14 11l.500 3c-2 0-4-.3-6-1l-5.500 3 1.500-5C4 22 1 18 1 14z" stroke="#bbb" strokeWidth=".8" />
              <path d="M2 18c1 3 3.500 5 6 6l-1.500 5 5.500-3 6 1" fill="none" stroke="#777" />
              <ellipse cx="31" cy="24.500" rx="13.500" ry="11.500" stroke="#aaa" strokeWidth=".8" />
              <path d="M18.500 28c3 7 10 9.500 17 7.500l6 2-1.500-4.500c3-2 4.500-5 4.500-8" stroke="#777" />
              <path d="M9 10.500c.5-2 3-2 3.500 0M20 10.500c.5-2 3-2 3.500 0M25 21c.5-2 3-2 3.500 0M33.500 21c.5-2 3-2 3.500 0" fill="none" stroke="#666" />
            </svg>
            <span className="whitespace-nowrap font-['Noto_Sans_CJK_SC',sans-serif] text-[27px] font-light leading-[38px] text-white [text-shadow:1px_1px_0_#777,0_0_1px_#bbb]">牛侃BIM</span>
          </div>
        </section>
      </main>

      <footer className="flex h-[13px] shrink-0 items-center border-t border-[#eceef3] bg-linear-to-b from-[#d9dce4] via-[#a6abb6] to-[#b7bcc7] font-['Noto_Sans_CJK_SC',sans-serif] text-[8px] leading-3 text-[#2d2f33]">
        <span className="mr-auto pl-[3px] text-[9px]">若需帮助, 请按F1</span>
        <span className="whitespace-nowrap border-l border-[#d4d7de] px-[2px]">1:1129000</span>
        <span className="whitespace-nowrap border-l border-[#d4d7de] px-[2px]">MERCAT ( WGS84 ) ( 12292437.710, 4893707.472 )</span>
        <span className="whitespace-nowrap border-l border-[#d4d7de] pl-[2px] pr-1">40° 22' 49.9242" N, 110° 25' 29.4483" E</span>
      </footer>
    </div>
  );
}
